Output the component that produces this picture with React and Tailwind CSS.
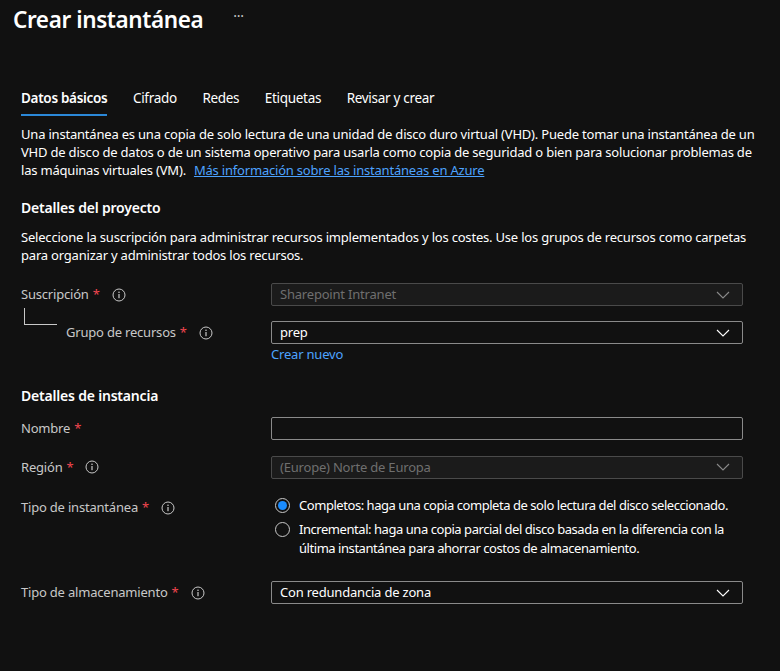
import React from 'react';

// Azure-style "Crear instantánea" form, dark theme

const Req = () => <span className="text-[#f1464f] ml-1">*</span>;

const Info = () => (
  <svg width="14" height="14" viewBox="0 0 14 14" className="ml-3 shrink-0">
    <circle cx="7" cy="7" r="6" fill="none" stroke="#c8c8c8" strokeWidth="1" />
    <circle cx="7" cy="4.3" r="0.8" fill="#c8c8c8" />
    <rect x="6.4" y="6" width="1.2" height="4.2" fill="#c8c8c8" />
  </svg>
);

const Chevron = ({ dim }) => (
  <svg width="14" height="8" viewBox="0 0 14 8">
    <path d="M1 1 L7 7 L13 1" fill="none" stroke={dim ? '#8a8a8a' : '#ffffff'} strokeWidth="1.1" />
  </svg>
);

function Select({ value, disabled }) {
  return (
    <div
      className={`w-[472px] h-[23px] flex items-center justify-between px-2 rounded-[2px] border ${
        disabled ? 'bg-[#1b1b1b] border-[#4a4a4a] text-[#6f6f6f]' : 'bg-[#111111] border-[#8a8a8a] text-white'
      }`}
    >
      <span>{value}</span>
      <span className="pr-1"><Chevron dim={disabled} /></span>
    </div>
  );
}

function Label({ children, info = true }) {
  return (
    <div className="w-[250px] flex items-center text-[#c8c8c8]">
      <span>{children}</span>
      <Req />
      {info && <Info />}
    </div>
  );
}

function Radio({ checked }) {
  return (
    <span className="w-[15px] h-[15px] mt-[2px] rounded-full border border-[#c8c8c8] flex items-center justify-center shrink-0">
      {checked && <span className="w-[9px] h-[9px] rounded-full bg-[#1a8cff]" />}
    </span>
  );
}

export default function App() {
  const tabs = ['Datos básicos', 'Cifrado', 'Redes', 'Etiquetas', 'Revisar y crear'];
  return (
    <main className="min-h-[671px] w-[780px] bg-[#111111] text-white text-[13px] font-['Noto_Sans',sans-serif] tracking-[-0.2px]">
      <div className="flex items-center px-[13px] pt-[2px] h-[37px]">
        <h1 className="text-[22.5px] font-semibold tracking-[-0.4px]">Crear instantánea</h1>
        <span className="ml-[30px] text-[#c8c8c8] text-[14px] -mt-2">···</span>
      </div>

      <div className="px-[21px]">
        <div className="flex gap-[25.5px] mt-[51px] text-[13.5px] tracking-[-0.3px]">
          {tabs.map((t, i) => (
            <div key={t} className={`pb-[6px] border-b-2 ${i === 0 ? 'font-semibold border-[#2b88d8]' : 'border-transparent'}`}>
              {t}
            </div>
          ))}
        </div>

        <div className="mt-[9px] leading-[18px] w-[740px]">
          <p>
            Una instantánea es una copia de solo lectura de una unidad de disco duro virtual (VHD). Puede tomar una instantánea de un
            VHD de disco de datos o de un sistema operativo para usarla como copia de seguridad o bien para solucionar problemas de
          </p>
          <div className="flex gap-[8px]">
            <span>las máquinas virtuales (VM).</span>
            <a className="text-[#4da3ff] underline">Más información sobre las instantáneas en Azure</a>
          </div>
        </div>

        <h2 className="mt-[18px] font-semibold text-[14px]">Detalles del proyecto</h2>
        <p className="mt-[10px] leading-[18px] w-[740px]">
          Seleccione la suscripción para administrar recursos implementados y los costes. Use los grupos de recursos como carpetas
          para organizar y administrar todos los recursos.
        </p>

        <div className="mt-[19px] flex items-center">
          <Label>Suscripción</Label>
          <Select value="Sharepoint Intranet" disabled />
        </div>

        <div className="flex items-start">
          <div className="w-[250px] flex">
            <div className="w-[33px] h-[17px] ml-[3px] border-l border-b border-[#c8c8c8] mt-[2px]" />
            <div className="flex items-center mt-[17px] ml-[9px] text-[#c8c8c8]">
              <span>Grupo de recursos</span>
              <Req />
              <Info />
            </div>
          </div>
          <div className="mt-[15px]">
            <Select value="prep" />
            <div className="text-[#4da3ff] mt-[1px]">Crear nuevo</div>
          </div>
        </div>

        <h2 className="mt-[20px] font-semibold text-[14px]">Detalles de instancia</h2>

        <div className="mt-[11px] flex items-center">
          <Label info={false}>Nombre</Label>
          <div className="w-[472px] h-[23px] rounded-[2px] border border-[#8a8a8a]" />
        </div>

        <div className="mt-[16px] flex items-center">
          <Label>Región</Label>
          <Select value="(Europe) Norte de Europa" disabled />
        </div>

        <div className="mt-[17px] flex items-start">
          <div className="w-[250px] flex items-center text-[#c8c8c8] mt-[2px]">
            <span>Tipo de instantánea</span>
            <Req />
            <Info />
          </div>
          <div className="w-[472px] pl-[4px] flex flex-col gap-[5px] tracking-[-0.45px]">
            <div className="flex gap-[9px]">
              <Radio checked />
              <span>Completos: haga una copia completa de solo lectura del disco seleccionado.</span>
            </div>
            <div className="flex gap-[9px]">
              <Radio />
              <span className="leading-[19px]">
                Incremental: haga una copia parcial del disco basada en la diferencia con la última instantánea para ahorrar costos de
                almacenamiento.
              </span>
            </div>
          </div>
        </div>

        <div className="mt-[23px] flex items-center">
          <Label>Tipo de almacenamiento</Label>
          <Select value="Con redundancia de zona" />
        </div>
      </div>
    </main>
  );
}
